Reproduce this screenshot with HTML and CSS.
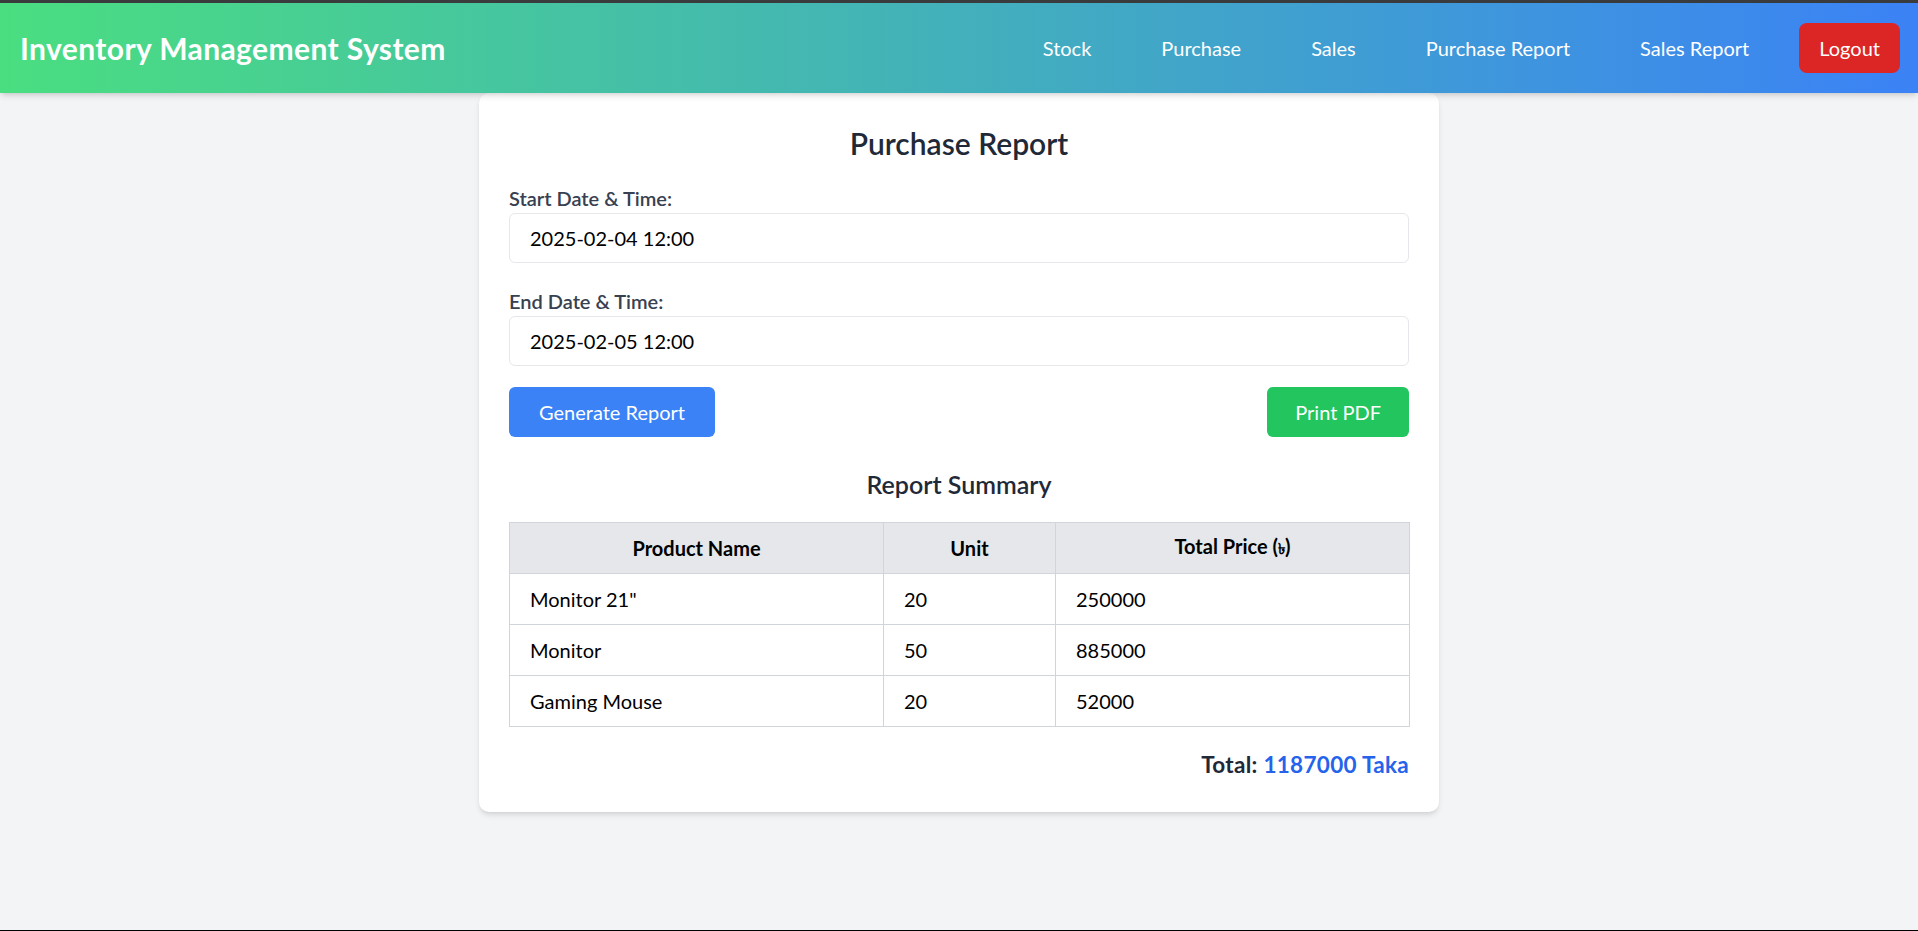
FILE: index.html
```html
<!DOCTYPE html>
<html lang="en">
<head>
<meta charset="utf-8">
<title>Purchase Report</title>
<link rel="stylesheet" href="styles.css">
</head>
<body>
<div class="screen">
  <header class="topbar">
    <h1 class="brand">Inventory Management System</h1>
    <nav class="nav">
      <a class="nav-link" href="#">Stock</a>
      <a class="nav-link" href="#">Purchase</a>
      <a class="nav-link" href="#">Sales</a>
      <a class="nav-link" href="#">Purchase Report</a>
      <a class="nav-link" href="#">Sales Report</a>
      <button class="logout" type="button">Logout</button>
    </nav>
  </header>
  <main class="main">
    <section class="card">
      <h2 class="card-title">Purchase Report</h2>
      <div class="field field-first">
        <label class="label">Start Date &amp; Time:</label>
        <div class="input">2025-02-04 12:00</div>
      </div>
      <div class="field">
        <label class="label">End Date &amp; Time:</label>
        <div class="input">2025-02-05 12:00</div>
      </div>
      <div class="actions">
        <button class="btn btn-blue" type="button">Generate Report</button>
        <button class="btn btn-green" type="button">Print PDF</button>
      </div>
      <h3 class="summary-title">Report Summary</h3>
      <table class="report">
        <colgroup>
          <col class="c1"><col class="c2"><col class="c3">
        </colgroup>
        <thead>
          <tr><th>Product Name</th><th>Unit</th><th>Total Price (<span class="taka">৳</span>)</th></tr>
        </thead>
        <tbody>
          <tr><td>Monitor 21"</td><td>20</td><td>250000</td></tr>
          <tr><td>Monitor</td><td>50</td><td>885000</td></tr>
          <tr><td>Gaming Mouse</td><td>20</td><td>52000</td></tr>
        </tbody>
      </table>
      <p class="total">Total: <span class="total-value">1187000 Taka</span></p>
    </section>
  </main>
</div>
</body>
</html>
```
FILE: styles.css
```css
* { box-sizing: border-box; }
html, body { margin: 0; padding: 0; }
body {
  font-family: Lato, "Noto Sans", "Liberation Sans", sans-serif;
  background: #f3f4f6;
  color: #111827;
}
.screen {
  height: 931px;
  overflow: hidden;
  border-top: 3px solid #3a3b3c;
  border-bottom: 1px solid #000;
  display: flex;
  flex-direction: column;
}
.topbar {
  height: 90px;
  flex: none;
  display: flex;
  align-items: center;
  justify-content: space-between;
  padding: 0 18px 0 20px;
  background: linear-gradient(to right, #4ade80, #3b82f6);
  box-shadow: 0 4px 6px -1px rgba(0,0,0,0.12), 0 2px 4px -2px rgba(0,0,0,0.1);
  position: relative;
  z-index: 2;
}
.brand {
  margin: 0;
  font-size: 30px;
  line-height: 40px;
  font-weight: 700;
  letter-spacing: 0.4px;
  color: #fff;
}
.nav {
  display: flex;
  align-items: center;
  gap: 30px;
}
.nav-link {
  color: #fff;
  text-decoration: none;
  font-size: 20px;
  line-height: 30px;
  padding: 10px 20px;
}
.logout {
  font-family: inherit;
  font-size: 20px;
  line-height: 30px;
  padding: 10px 20px;
  border: 0;
  border-radius: 8px;
  background: #dc2626;
  color: #fff;
}
.main {
  flex: 1;
  display: flex;
  justify-content: center;
  align-items: flex-start;
}
.card {
  width: 960px;
  background: #fff;
  border-radius: 10px;
  padding: 30px;
  box-shadow: 0 4px 6px -1px rgba(0,0,0,0.1), 0 2px 4px -2px rgba(0,0,0,0.1);
}
.card-title {
  margin: 0 0 20px;
  text-align: center;
  font-size: 30px;
  line-height: 40px;
  font-weight: 600;
  color: #1f2937;
}
.field { margin-bottom: 21px; }
.field-first { margin-bottom: 23px; }
.label {
  display: block;
  font-size: 20px;
  line-height: 30px;
  font-weight: 600;
  color: #374151;
}
.input {
  height: 50px;
  border: 1px solid #e5e7eb;
  border-radius: 6px;
  padding: 0 20px;
  display: flex;
  align-items: center;
  font-size: 20px;
  color: #000;
}
.actions {
  display: flex;
  justify-content: space-between;
}
.btn {
  font-family: inherit;
  font-size: 20px;
  line-height: 30px;
  padding: 10px 30px;
  border: 0;
  border-radius: 6px;
  color: #fff;
}
.btn-blue { background: #3b82f6; }
.btn-green { background: #22c55e; padding: 10px 28px; }
.summary-title {
  margin: 30px 0 20px;
  text-align: center;
  font-size: 25px;
  line-height: 35px;
  font-weight: 600;
  color: #1f2937;
}
.report {
  width: 100%;
  border-collapse: collapse;
  table-layout: fixed;
  border: 1px solid #d1d5db;
}
.c1 { width: 374px; }
.c2 { width: 172px; }
.c3 { width: 354px; }
.report th, .report td {
  border: 1px solid #d1d5db;
  height: 51px;
  padding: 0 20px;
  font-size: 20px;
  color: #000;
}
.report th {
  background: #e5e7eb;
  font-weight: 700;
  text-align: center;
}
.report td { text-align: left; }
.taka { font-size: 15px; }
.total {
  margin: 20px 0 0;
  text-align: right;
  font-size: 22.5px;
  line-height: 35px;
  font-weight: 700;
  letter-spacing: 0.3px;
  color: #1f2937;
}
.total-value { color: #2563eb; }
```
